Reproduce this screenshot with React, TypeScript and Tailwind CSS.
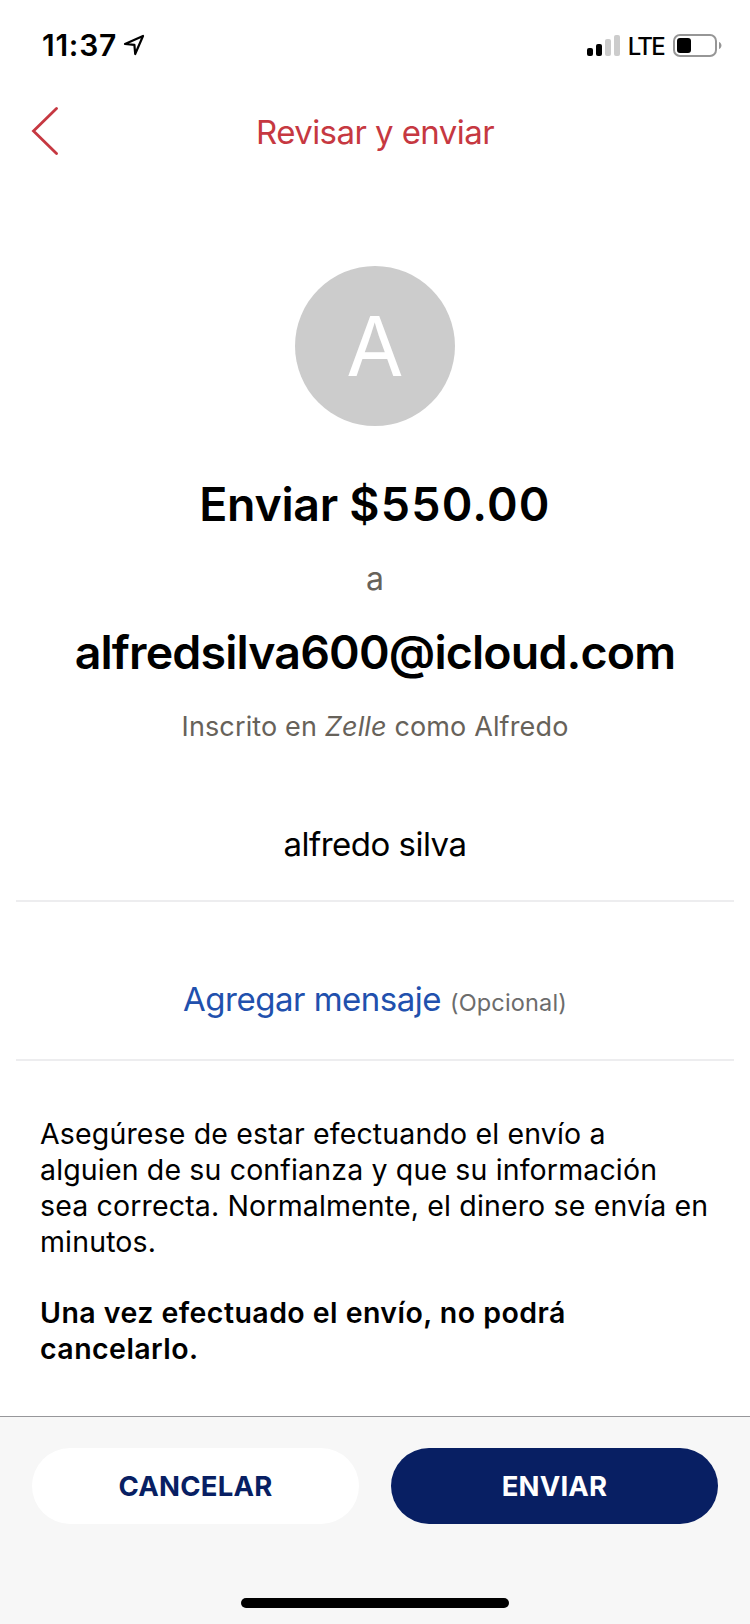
import React from 'react';

interface ActionButtonProps {
  label: string;
  primary?: boolean;
}

function StatusBar() {
  return (
    <div className="flex h-[90px] items-center justify-between pl-[42px] pr-[27px] text-black">
      <div className="flex items-center">
        <span className="text-[30px] font-semibold leading-none tracking-[0.75px]">11:37</span>
        <svg className="ml-[6px]" width="22" height="22" viewBox="0 0 22 22" fill="none">
          <path d="M2 10 L20 2 L12.2 20 L11.4 10.8 Z" stroke="currentColor" strokeWidth="2.2" strokeLinejoin="round" />
        </svg>
      </div>

      <div className="flex items-center">
        <svg width="34" height="22" viewBox="0 0 34 22">
          <rect x="0" y="14" width="6" height="8" rx="2" fill="#000" />
          <rect x="9" y="10" width="6" height="12" rx="2" fill="#000" />
          <rect x="18" y="5" width="6" height="17" rx="2" fill="#ccc" />
          <rect x="27" y="1" width="6" height="21" rx="2" fill="#ccc" />
        </svg>
        <span className="ml-[7px] mt-[3px] text-[24px] font-medium leading-none tracking-[-1.7px]">LTE</span>
        <svg className="ml-[9px] mt-px" width="50" height="24" viewBox="0 0 50 24">
          <rect x="1" y="1" width="42" height="21" rx="6" fill="none" stroke="#969696" strokeWidth="2" />
          <rect x="4" y="4" width="14" height="15" rx="3" fill="#000" />
          <path d="M46 8 C49.3 9.2 49.3 13.8 46 15 Z" fill="#969696" />
        </svg>
      </div>
    </div>
  );
}

function Header() {
  return (
    <header className="grid h-[86px] grid-cols-[90px_1fr_90px] items-center text-[#c63841]">
      <button className="pb-1 pl-[31px]" aria-label="Atrás">
        <svg width="28" height="48" viewBox="0 0 28 48" fill="none">
          <path d="M25.5 1.5 L2.5 24 L25.5 46.5" stroke="currentColor" strokeWidth="2.8" strokeLinecap="round" />
        </svg>
      </button>
      <h1 className="pb-[3px] text-center text-[33px] leading-10 tracking-[-0.57px]">Revisar y enviar</h1>
    </header>
  );
}

function ActionButton({ label, primary = false }: ActionButtonProps) {
  return (
    <button
      className={`h-[76px] flex-1 rounded-full pt-[2px] text-[27.5px] font-bold leading-none tracking-[0.2px]
        ${primary ? 'bg-[#081f63] text-white' : 'bg-white text-[#081f63]'}`}
    >
      {label}
    </button>
  );
}

export default function App() {
  return (
    <div className="flex h-[1624px] w-[750px] flex-col overflow-hidden bg-white font-[Inter,'Liberation_Sans',sans-serif]">
      <StatusBar />
      <Header />

      <main className="flex-1">
        {/* Recipient summary */}
        <section className="flex flex-col items-center pt-[90px] text-center">
          <div className="flex h-40 w-40 items-center justify-center rounded-full bg-[#ccc] text-[83px] leading-none text-white">
            A
          </div>
          <p className="mt-[50px] whitespace-nowrap text-[46.5px] font-semibold leading-[56px]">
            <span className="tracking-[-0.3px]">Enviar </span>
            <span className="tracking-[1.2px]">$550.00</span>
          </p>
          <p className="mt-[27px] text-[32px] leading-10 text-[#67625a]">a</p>
          <p className="mt-[25px] whitespace-nowrap text-[46.5px] font-semibold leading-[56px] tracking-[-0.84px]">
            alfredsilva600@icloud.com
          </p>
          <p className="mt-[29px] text-[27px] leading-9 tracking-[0.14px] text-[#67625a]">
            Inscrito en <em>Zelle</em> como Alfredo
          </p>
        </section>

        <div className="mx-4 mt-[79px] border-b-2 border-[#ededef] pb-9 text-center text-[33px] leading-10 tracking-[-0.52px]">
          alfredo silva
        </div>

        <div className="mx-4 flex items-baseline justify-center border-b-2 border-[#ededef] pb-9 pt-[77px]">
          <a className="text-[33px] leading-10 tracking-[-0.5px] text-[#2150ad]">Agregar mensaje</a>
          <span className="ml-[9px] text-[23.5px] leading-10 tracking-[0.15px] text-[#6c6c6c]">(Opcional)</span>
        </div>

        {/* Disclaimer */}
        <div className="px-10 pt-[55px] text-[28.5px] leading-[35.9px]">
          <p className="whitespace-nowrap tracking-[0.15px]">
            Asegúrese de estar efectuando el envío a<br />
            alguien de su confianza y que su información<br />
            sea correcta. Normalmente, el dinero se envía en<br />
            minutos.
          </p>
          <p className="mt-[35px] whitespace-nowrap font-semibold tracking-[0.45px]">
            Una vez efectuado el envío, no podrá<br />
            cancelarlo.
          </p>
        </div>
      </main>

      <footer className="flex h-[208px] flex-col justify-between border-t border-[#97979a] bg-[#f7f7f7] pb-4 pt-[31px]">
        <div className="flex gap-8 px-8">
          <ActionButton label="CANCELAR" />
          <ActionButton label="ENVIAR" primary />
        </div>
        <div className="mx-auto h-[10px] w-[268px] rounded-full bg-black" />
      </footer>
    </div>
  );
}
